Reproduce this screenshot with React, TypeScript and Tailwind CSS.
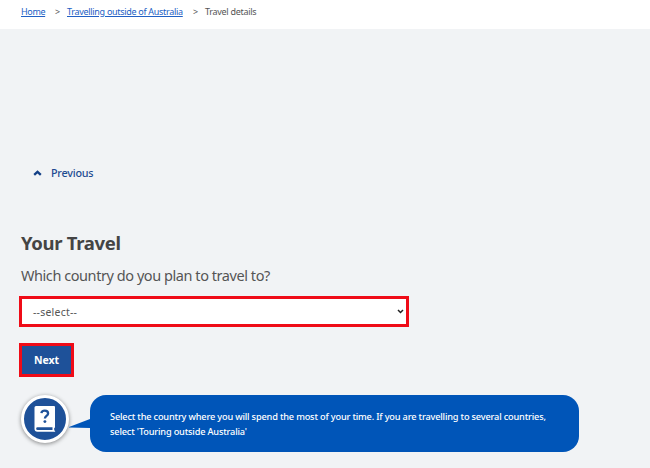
import React from "react";

function Breadcrumb() {
  return (
    <nav className="flex h-[29px] items-start bg-white pl-[21px] pt-[6px] text-[9px] leading-[12px]">
      <a href="#" className="w-[34px] text-[#2160c4] underline tracking-[-0.36px]">Home</a>
      <span className="w-3 text-[#555]">&gt;</span>
      <a href="#" className="w-[126px] whitespace-nowrap text-[#2160c4] underline tracking-[-0.3px]">Travelling outside of Australia</a>
      <span className="w-3 text-[#555]">&gt;</span>
      <span className="text-[#555] tracking-[-0.29px]">Travel details</span>
    </nav>
  );
}

function HelpIcon() {
  return (
    <div className="flex h-12 w-12 shrink-0 items-center justify-center rounded-full border-[3px] border-white bg-[#1e5199] shadow-[0_1px_4px_rgba(0,0,0,0.45)]">
      <svg width="22" height="26" viewBox="0 0 22 26" fill="none">
        <path d="M2 0h18a1 1 0 0 1 1 1v20.500l-.8.600v2l1.200 1.600H3.500A3 3 0 0 1 .5 22.700V1.500A1.500 1.500 0 0 1 2 0z" fill="white" />
        <path d="M3.500 21.300H18.500v2.700H3.500a1.350 1.350 0 0 1 0-2.700z" fill="#1e5199" />
        <path d="M7.400 7.200C7.600 5.400 8.900 4.700 10.800 4.700c1.900 0 3.300.9 3.300 2.700 0 2.400-3.200 2.600-3.200 5" stroke="#1e5199" strokeWidth="2.300" />
        <circle cx="10.900" cy="15.600" r="1.450" fill="#1e5199" />
      </svg>
    </div>
  );
}

export default function App() {
  return (
    <div className="h-[468px] w-[650px] overflow-hidden bg-[#f1f3f5] font-['Noto_Sans','Open_Sans',sans-serif] text-[#444]">
      <Breadcrumb />
      <main className="flex flex-col items-start pl-[21px] pt-[136px]">
        <button className="flex h-4 items-center pl-3 text-[#1e4b91]">
          <svg width="9" height="6" viewBox="0 0 9 6" fill="none">
            <path d="M1.200 4.900 4.500 1.800 7.800 4.900" stroke="#123f86" strokeWidth="2.300" />
          </svg>
          <span className="pl-[9px] text-[10.800px] font-medium leading-4 tracking-[-0.220px]">Previous</span>
        </button>
        <h1 className="mt-[49px] h-[26px] whitespace-nowrap text-[18.500px] font-bold leading-[26px] tracking-[-0.320px]">Your Travel</h1>
        <label className="mb-px mt-[9px] h-[20px] whitespace-nowrap text-[14.500px] leading-[20px] tracking-[-0.440px] text-[#555]">Which country do you plan to travel to?</label>
        <div className="ml-[-2px] mt-[10px] flex h-[31px] w-[390px] items-center justify-between border-[3px] border-[#ef0b17] bg-white pl-[11px] pr-[2px] text-[10.500px] text-[#555]">
          <span className="leading-4 tracking-[0.220px]">--select--</span>
          <svg width="7" height="5" viewBox="0 0 7 5" fill="none">
            <path d="M1 1 3.500 3.500 6 1" stroke="#222" strokeWidth="1.500" />
          </svg>
        </div>
        <button className="ml-[-2px] mt-4 flex h-[34px] w-[55px] items-center justify-center border-[3px] border-[#ef0b17] bg-[#1e5199] text-[10.500px] font-bold leading-4 text-white">Next</button>
        <div className="mt-[18px] flex h-[57px] items-start">
          <HelpIcon />
          <svg className="mt-[22px] shrink-0" width="21" height="12" viewBox="0 0 21 12">
            <path d="M-1 10.500 21 2V11z" fill="#0055b8" />
          </svg>
          <div className="h-[57px] w-[489px] whitespace-nowrap rounded-[16px] bg-[#0055b8] pl-5 pt-[14px] text-[9.200px] font-medium leading-[15px] tracking-[-0.170px] text-white">
            <p>Select the country where you will spend the most of your time. If you are travelling to several countries,</p>
            <p>select &apos;Touring outside Australia&apos;</p>
          </div>
        </div>
      </main>
    </div>
  );
}
